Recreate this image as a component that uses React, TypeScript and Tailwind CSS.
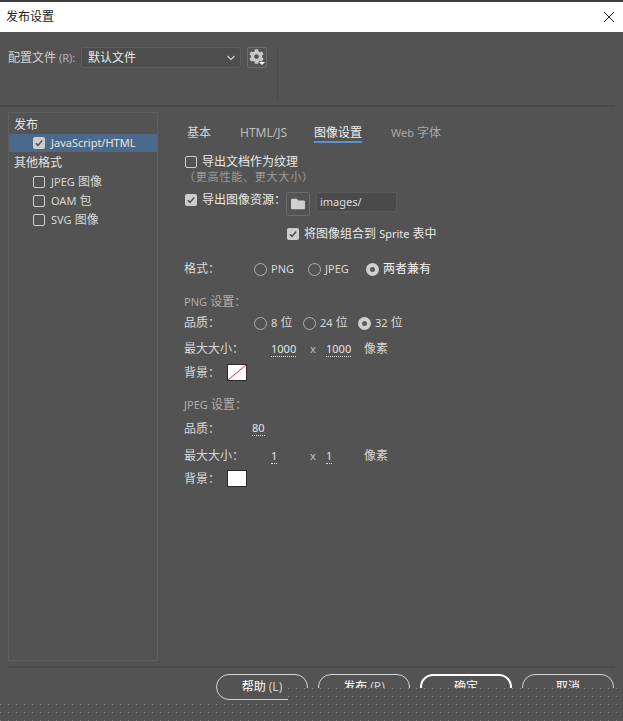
import React from "react";
import { FaCog, FaFolder } from "react-icons/fa";

const CJK = "font-['Noto_Sans','Noto_Sans_CJK_SC',sans-serif]";

function L({ children }: { children: React.ReactNode }) {
  return <span className="text-[11px]">{children}</span>;
}

function Check({ on = false }: { on?: boolean }) {
  if (!on) return <span className="block w-[12px] h-[12px] shrink-0 rounded-[2px] border border-[#cfcfcf]" />;
  return (
    <span className="flex items-center justify-center w-[12px] h-[12px] shrink-0 rounded-[2px] bg-[#cdcdcd]">
      <svg width="10" height="10" viewBox="0 0 10 10" fill="none">
        <path d="M1.8 5.2 L4 7.4 L8.2 2.4" stroke="#4f4f4f" strokeWidth="1.5" />
      </svg>
    </span>
  );
}

function Radio({ on = false, label, w }: { on?: boolean; label: React.ReactNode; w: string }) {
  return (
    <div className={`flex items-center gap-[4px] shrink-0 ${w}`}>
      {on ? (
        <span className="flex items-center justify-center w-[13px] h-[13px] rounded-full bg-[#cfcfcf]">
          <span className="w-[5px] h-[5px] rounded-full bg-[#5c5c5c]" />
        </span>
      ) : (
        <span className="block w-[13px] h-[13px] rounded-full border border-[#b0b0b0]" />
      )}
      <span>{label}</span>
    </div>
  );
}

function Row({ className = "", children }: { className?: string; children: React.ReactNode }) {
  return <div className={`flex items-center h-[14px] leading-[14px] whitespace-nowrap ${className}`}>{children}</div>;
}

function Val({ v }: { v: string }) {
  return <span className="inline-block h-[14px] leading-[12px] text-[11px] border-b border-dotted border-[#e0e0e0] text-[#e4e4e4]">{v}</span>;
}

function SizeRow({ a, b, className }: { a: string; b: string; className: string }) {
  return (
    <Row className={className}>
      <span className="w-[87px]">最大大小：</span>
      <span className="w-[39px]"><Val v={a} /></span>
      <span className="w-[16px] text-[#c0c0c0] text-[11px]">x</span>
      <span className="w-[38px]"><Val v={b} /></span>
      <span>像素</span>
    </Row>
  );
}

function Btn({ label, key2, strong }: { label: string; key2?: string; strong?: boolean }) {
  return (
    <div className={`flex items-center justify-center gap-[3px] w-[92px] h-[26px] rounded-[13px] text-[12px] text-white ${strong ? "border-2 border-white" : "border border-[#d6d6d6]"}`}>
      <span>{label}</span>
      {key2 && <span className="text-[#d0d0d0]">{key2}</span>}
    </div>
  );
}

function Dots({ className }: { className: string }) {
  const id = "dots" + className.length;
  return (
    <div className={`absolute bg-[#535353] ${className}`}>
      <svg width="100%" height="100%" className="block">
        <defs>
          <pattern id={id} width="8" height="8" patternUnits="userSpaceOnUse">
            <rect x="0" y="0" width="1" height="1" fill="#7d7d7d" />
            <rect x="1" y="1" width="1" height="1" fill="#404040" />
          </pattern>
        </defs>
        <rect width="100%" height="100%" fill={`url(#${id})`} />
      </svg>
    </div>
  );
}

export default function App() {
  return (
    <div className={`relative w-[623px] h-[721px] overflow-hidden bg-[#535353] text-[12px] text-[#d8d8d8] ${CJK}`}>
      <div className="h-[2px] bg-[#3f3f3f]" />
      <div className="flex items-center justify-between h-[30px] bg-white pl-[6px] pr-[9px] text-[12px] text-[#222]">
        <span>发布设置</span>
        <svg width="10" height="10" viewBox="0 0 10 10" stroke="#222" strokeWidth="1">
          <path d="M0 0 L10 10 M10 0 L0 10" />
        </svg>
      </div>

      <div className="flex items-start h-[75px] pt-[15px] pl-[8px] mr-[8px] border-b-2 border-[#4a4a4a]">
        <div className="flex items-center h-[21px] text-[#d0d0d0]">
          <span className="w-[73px] whitespace-nowrap">配置文件<span className="text-[#b4b4b4] text-[11px]"> (R):</span></span>
          <div className="flex items-center justify-between w-[160px] h-[21px] pl-[6px] pr-[4px] bg-[#4d4d4d] border border-[#5e5e5e] rounded-[2px] text-[#e8e8e8]">
            <span className="mt-[1px]">默认文件</span>
            <svg width="10" height="8" viewBox="0 0 10 8" fill="none" stroke="#d0d0d0" strokeWidth="1.2">
              <path d="M1.5 2 L5 5.5 L8.5 2" />
            </svg>
          </div>
          <div className="relative flex items-center justify-center w-[20px] h-[21px] ml-[6px] border border-[#6c6c6c] rounded-[2px]">
            <FaCog size={15} className="text-[#c8c8c8] -mt-[2px] -ml-[2px]" />
            <span className="absolute right-[1px] bottom-[2px] w-0 h-0 border-l-[3px] border-r-[3px] border-t-[3px] border-l-transparent border-r-transparent border-t-white" />
          </div>
        </div>
        <div className="w-[1px] h-[54px] ml-[10px] -mt-px bg-[#4a4a4a]" />
      </div>

      <div className="flex h-[549px] mt-[5px] ml-[8px]">
        <div className="w-[150px] h-[549px] shrink-0 border border-[#5f5f5f] rounded-[2px] pt-[2px]">
          <div className="flex items-center h-[19px] pl-[5px] text-[#e4e4e4]">发布</div>
          <div className="flex items-center gap-[6px] h-[18px] pl-[24px] bg-[#4b6a8b] text-[#e4e4e4]">
            <Check on /><L>JavaScript/HTML</L>
          </div>
          <div className="flex items-center h-[19px] pl-[5px] text-[#e4e4e4] mt-[1px]">其他格式</div>
          <div className="flex items-center gap-[6px] h-[19px] pl-[24px]"><Check /><span><L>JPEG</L> 图像</span></div>
          <div className="flex items-center gap-[6px] h-[19px] pl-[24px]"><Check /><span><L>OAM</L> 包</span></div>
          <div className="flex items-center gap-[6px] h-[19px] pl-[24px]"><Check /><span><L>SVG</L> 图像</span></div>
        </div>

        <div className="flex-1 ml-[26px] flex flex-col">
          <div className="flex items-start h-[20px] mt-[11px] pl-[3px] leading-[19px] text-[#bcbcbc] whitespace-nowrap">
            <span className="w-[53px] text-[#d0d0d0]">基本</span>
            <span className="w-[74px]">HTML/JS</span>
            <span className="w-[77px]"><span className="inline-block w-[48px] h-[20px] text-[#f0f0f0] border-b-2 border-[#5a93cf]">图像设置</span></span>
            <span className="text-[#a8a8a8]"><L>Web</L> 字体</span>
          </div>

          <Row className="mt-[12px] gap-[5px] pl-px text-[#e8e8e8]"><Check />导出文档作为纹理</Row>
          <Row className="mt-[1px] text-[11px] text-[#9c9c9c] tracking-[0.8px]">（更高性能、更大大小）</Row>

          <div className="flex items-start h-[24px] mt-[8px] pl-px whitespace-nowrap text-[#e8e8e8]">
            <div className="flex items-center gap-[5px] h-[14px] w-[101px] mt-[1px] leading-[14px]"><Check on />导出图像资源：</div>
            <div className="flex items-center justify-center w-[24px] h-[24px] border border-[#6c6c6c] rounded-[2px]">
              <FaFolder size={14} className="text-[#d0d0d0]" />
            </div>
            <div className="flex items-center w-[81px] h-[20px] ml-[6px] pl-[3px] bg-[#4a4a4a] border border-[#5a5a5a] rounded-[2px] text-[#dcdcdc] text-[11px]">images/</div>
          </div>

          <Row className="mt-[11px] gap-[5px] pl-[103px] text-[#e8e8e8]"><Check on /><span>将图像组合到 <L>Sprite</L> 表中</span></Row>

          <Row className="mt-[21px]">
            <span className="w-[70px]">格式：</span>
            <Radio label={<L>PNG</L>} w="w-[54px]" />
            <Radio label={<L>JPEG</L>} w="w-[58px]" />
            <Radio on label="两者兼有" w="text-[#f0f0f0]" />
          </Row>

          <Row className="mt-[19px] text-[#b0b0b0]"><span><L>PNG</L> 设置：</span></Row>
          <Row className="mt-[7px]">
            <span className="w-[70px]">品质：</span>
            <Radio label={<><L>8</L> 位</>} w="w-[49px]" />
            <Radio label={<><L>24</L> 位</>} w="w-[55px]" />
            <Radio on label={<><L>32</L> 位</>} w="" />
          </Row>
          <SizeRow a="1000" b="1000" className="mt-[12px]" />
          <div className="flex items-center h-[16px] mt-[8px]">
            <span className="w-[43px] mt-[1px]">背景：</span>
            <div className="w-[20px] h-[17px] bg-white border border-[#2a2a2a]">
              <svg width="100%" height="100%" viewBox="0 0 18 15" preserveAspectRatio="none">
                <path d="M0 15 L18 0" stroke="#d8344c" strokeWidth="1" />
              </svg>
            </div>
          </div>

          <Row className="mt-[18px] text-[#b0b0b0]"><span><L>JPEG</L> 设置：</span></Row>
          <Row className="mt-[10px]">
            <span className="w-[68px]">品质：</span>
            <Val v="80" />
          </Row>
          <SizeRow a="1" b="1" className="mt-[13px]" />
          <div className="flex items-center h-[16px] mt-[7px]">
            <span className="w-[43px] mt-[1px]">背景：</span>
            <div className="w-[20px] h-[17px] bg-white border border-[#2a2a2a]" />
          </div>
        </div>
      </div>

      <div className="h-[2px] mx-[8px] mt-[5px] bg-[#4a4a4a]" />
      <div className="flex justify-end gap-[10px] pr-[9px] mt-[6px]">
        <Btn label="帮助" key2="(L)" />
        <Btn label="发布" key2="(P)" />
        <Btn label="确定" strong />
        <Btn label="取消" />
      </div>

      <Dots className="left-[288px] right-0 top-[688px] bottom-0" />
      <Dots className="left-0 w-[288px] top-[704px] bottom-0" />
    </div>
  );
}
